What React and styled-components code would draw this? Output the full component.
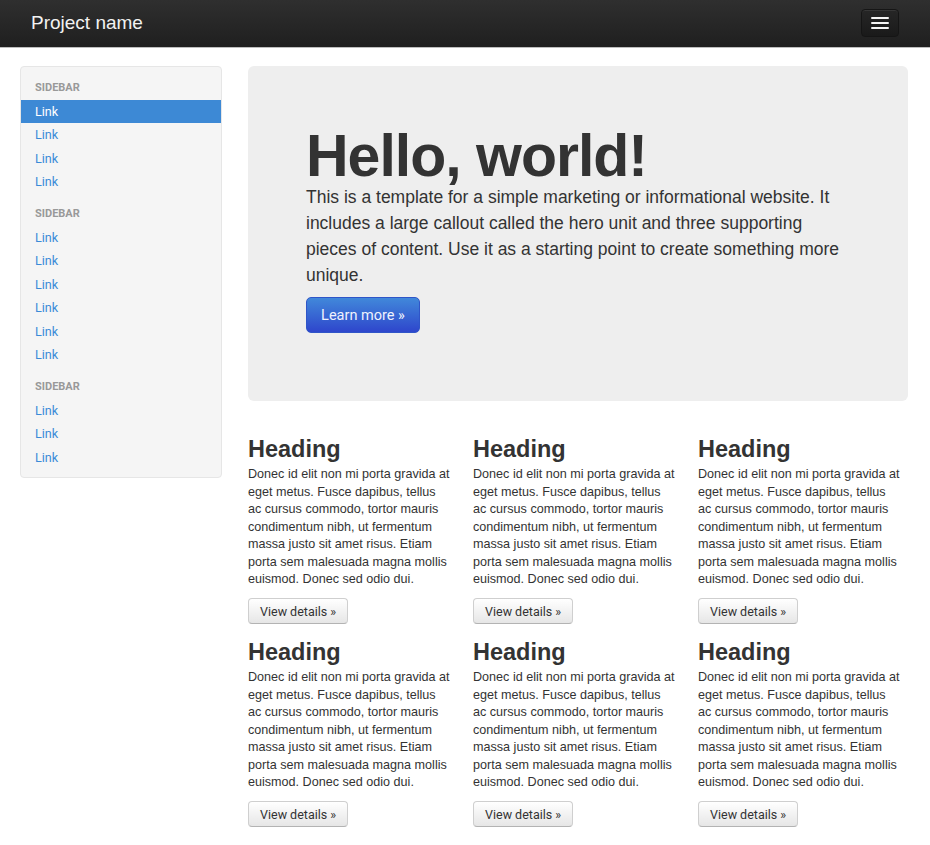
import React from 'react';
import styled, {createGlobalStyle} from 'styled-components';

const GlobalStyle = createGlobalStyle`
  body {
    margin: 0;
    background: #ffffff;
    color: #333333;
    font-family: "Liberation Sans", Arial, sans-serif;
  }
  * { box-sizing: border-box; }
`;

const Navbar = styled.header`
  height: 48px;
  display: flex;
  align-items: center;
  justify-content: space-between;
  padding: 0 31px;
  background: linear-gradient(#2f2f2f, #1f1f1f);
  border-bottom: 1px solid #bdbdbd;
`;

const Brand = styled.a`
  color: #f2f2f2;
  font-size: 19px;
  margin-top: -2px;
  text-decoration: none;
`;

const Toggle = styled.button`
  width: 38px;
  height: 28px;
  padding: 0;
  margin-top: -2px;
  display: flex;
  flex-direction: column;
  align-items: center;
  justify-content: center;
  gap: 3px;
  background: linear-gradient(#262626, #1a1a1a);
  border: 1px solid #151515;
  border-radius: 4px;
  box-shadow: inset 0 1px 0 rgba(255, 255, 255, 0.08);
`;

const Bar = styled.span`
  display: block;
  width: 18px;
  height: 2px;
  border-radius: 1px;
  background: #f5f5f5;
`;

const Layout = styled.div`
  display: grid;
  grid-template-columns: 202px 660px;
  column-gap: 26px;
  padding: 18px 20px 0;
  align-items: start;
`;

const Well = styled.nav`
  background: #f5f5f5;
  border: 1px solid #e6e6e6;
  border-radius: 4px;
  padding: 9px 0 8px;
  font-family: Roboto, "Liberation Sans", sans-serif;
`;

const NavHeader = styled.div`
  height: 23.5px;
  line-height: 23.5px;
  padding-left: 14px;
  margin-top: ${p => (p.$first ? '0' : '8.5px')};
  font-size: 11px;
  font-weight: 700;
  color: #999999;
  text-transform: uppercase;
`;

const NavLink = styled.a`
  display: block;
  height: 23.5px;
  line-height: 23.5px;
  padding-left: 14px;
  font-size: 12.6px;
  text-decoration: none;
  color: ${p => (p.$active ? '#ffffff' : '#3a8bd8')};
  background: ${p => (p.$active ? '#3d89d5' : 'transparent')};
`;

const Main = styled.main``;

const Hero = styled.section`
  background: #eeeeee;
  border-radius: 6px;
  padding: 60px 58px 68px;
  margin-bottom: 31px;
`;

const HeroTitle = styled.h1`
  margin: 0;
  font-size: 59px;
  line-height: 60px;
  letter-spacing: -1px;
  font-weight: 700;
  color: #333333;
`;

const HeroText = styled.p`
  margin: -2px 0 9px;
  font-size: 17.5px;
  line-height: 26px;
  color: #333333;
`;

const PrimaryButton = styled.a`
  display: inline-flex;
  align-items: center;
  justify-content: center;
  width: 114px;
  height: 36px;
  border-radius: 5px;
  background: linear-gradient(#4188da, #2e46cc);
  border: 1px solid #2f55c8;
  color: #eef2fd;
  font-family: Roboto, "Liberation Sans", sans-serif;
  font-size: 14.5px;
  text-decoration: none;
`;

const Row = styled.div`
  display: grid;
  grid-template-columns: repeat(3, 203px);
  column-gap: 22px;
`;

const Col = styled.div``;

const Heading = styled.h2`
  margin: 0;
  font-size: 23.5px;
  line-height: 34px;
  font-weight: 700;
  color: #333333;
`;

const Text = styled.p`
  margin: 0 0 9.5px;
  font-size: 12.6px;
  line-height: 17.5px;
  color: #333333;
`;

const DetailsButton = styled.a`
  display: inline-flex;
  align-items: center;
  justify-content: center;
  height: 26px;
  padding: 0 11px;
  margin-bottom: 11px;
  border: 1px solid #cfcfcf;
  border-bottom-color: #b3b3b3;
  border-radius: 4px;
  background: linear-gradient(#ffffff, #e6e6e6);
  color: #333333;
  font-family: Roboto, "Liberation Sans", sans-serif;
  font-size: 12.5px;
  text-decoration: none;
  white-space: nowrap;
`;

const sidebar = [
  {links: 4, active: 0},
  {links: 6},
  {links: 3},
];

const body = 'Donec id elit non mi porta gravida at eget metus. Fusce dapibus, tellus ac cursus commodo, tortor mauris condimentum nibh, ut fermentum massa justo sit amet risus. Etiam porta sem malesuada magna mollis euismod. Donec sed odio dui.';

function Block() {
  return (
    <Col>
      <Heading>Heading</Heading>
      <Text>{body}</Text>
      <DetailsButton href="#">View details &raquo;</DetailsButton>
    </Col>
  );
}

export default function App() {
  return (
    <>
      <GlobalStyle />
      <Navbar>
        <Brand href="#">Project name</Brand>
        <Toggle aria-label="Toggle navigation">
          <Bar />
          <Bar />
          <Bar />
        </Toggle>
      </Navbar>
      <Layout>
        <Well>
          {sidebar.map((group, g) => (
            <React.Fragment key={g}>
              <NavHeader $first={g === 0}>Sidebar</NavHeader>
              {Array.from({length: group.links}).map((_, i) => (
                <NavLink key={i} href="#" $active={group.active === i}>Link</NavLink>
              ))}
            </React.Fragment>
          ))}
        </Well>
        <Main>
          <Hero>
            <HeroTitle>Hello, world!</HeroTitle>
            <HeroText>
              This is a template for a simple marketing or informational website. It includes a large
              callout called the hero unit and three supporting pieces of content. Use it as a starting
              point to create something more unique.
            </HeroText>
            <PrimaryButton href="#">Learn more &raquo;</PrimaryButton>
          </Hero>
          <Row>
            <Block />
            <Block />
            <Block />
          </Row>
          <Row>
            <Block />
            <Block />
            <Block />
          </Row>
        </Main>
      </Layout>
    </>
  );
}
